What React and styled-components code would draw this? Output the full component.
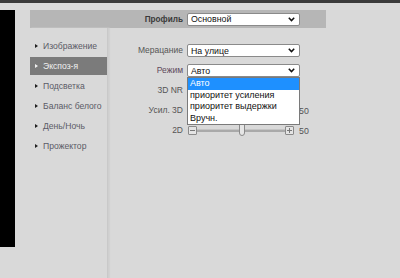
import React from "react";
import styled, { createGlobalStyle } from "styled-components";

const Global = createGlobalStyle`
  html, body { margin: 0; padding: 0; }
  body {
    background: #d9d9d9;
    font-family: "Liberation Sans", Arial, sans-serif;
    font-size: 9px;
    color: #555;
    width: 400px;
    height: 278px;
    overflow: hidden;
  }
`;

const Page = styled.div`
  display: flex;
  flex-direction: column;
  height: 278px;
`;

const TopBar = styled.div`
  height: 3px;
  background: #3a3a3a;
  flex: none;
`;

const Body = styled.div`
  display: flex;
  flex: 1;
  padding-top: 7px;
`;

const Screen = styled.div`
  width: 15px;
  height: 237px;
  background: #000;
  flex: none;
  margin-right: 15px;
`;

const Main = styled.div`
  width: 296px;
  display: flex;
  flex-direction: column;
`;

const ProfileBar = styled.div`
  height: 18px;
  background: #b6b6b6;
  display: flex;
  align-items: center;
  justify-content: flex-end;
  padding-right: 26px;
  gap: 4px;
`;

const ProfileLabel = styled.span`
  font-weight: bold;
  color: #3a3a3a;
  font-size: 8.2px;
`;

const Columns = styled.div`
  display: flex;
  flex: 1;
`;

const Sidebar = styled.div`
  width: 77px;
  padding-top: 9px;
  display: flex;
  flex-direction: column;
  gap: 2px;
  border-right: 1px solid #c9c9c9;
  box-shadow: 1px 0 1px #cfcfcf, 2px 0 1px #d3d3d3;
`;

const NavItem = styled.div`
  height: 18px;
  display: flex;
  align-items: center;
  padding-left: 5px;
  gap: 4px;
  font-size: 8.6px;
  white-space: nowrap;
  background: ${p => (p.$active ? "#7b7b7b" : "transparent")};
  color: ${p => (p.$active ? "#f0f0f0" : "#5b5b66")};
`;

const Arrow = styled.span`
  width: 0;
  height: 0;
  border-top: 2.5px solid transparent;
  border-bottom: 2.5px solid transparent;
  border-left: 3px solid ${p => (p.$active ? "#f0f0f0" : "#222")};
  margin-right: 1px;
  flex: none;
`;

const Form = styled.div`
  flex: 1;
  padding-top: 16px;
  padding-left: 2px;
  display: flex;
  flex-direction: column;
  position: relative;
`;

const Row = styled.div`
  height: 20px;
  display: flex;
  align-items: flex-start;
  gap: 4px;
`;

const Label = styled.div`
  width: 73px;
  text-align: right;
  line-height: 13px;
  font-size: 8.5px;
  white-space: nowrap;
  color: ${p => p.$color || "#555"};
`;

const Select = styled.div`
  width: 113px;
  height: 13px;
  box-sizing: border-box;
  background: #fff;
  border: 1px solid #8a8a8a;
  border-radius: 2px;
  display: flex;
  align-items: center;
  justify-content: space-between;
  padding: 0 4px 0 3px;
  font-size: 8.8px;
  color: #111;
  position: relative;
  flex: none;
`;

const Chevron = () => (
  <svg width="7" height="5" viewBox="0 0 7 5" style={{ marginLeft: "auto" }}>
    <path d="M0.8 0.8 L3.5 3.6 L6.2 0.8" fill="none" stroke="#111" strokeWidth="1.5" />
  </svg>
);

const Dropdown = styled.div`
  position: absolute;
  left: -1px;
  top: 12px;
  width: 113px;
  box-sizing: border-box;
  background: #fff;
  border: 1px solid #7a7a7a;
  z-index: 2;
`;

const Option = styled.div`
  height: 11.5px;
  line-height: 11.5px;
  padding-left: 2px;
  font-size: 9px;
  color: ${p => (p.$hl ? "#fff" : "#111")};
  background: ${p => (p.$hl ? "#1e90ff" : "transparent")};
`;

const SliderWrap = styled.div`
  display: flex;
  align-items: center;
  height: 13px;
  padding-left: 1px;
`;

const StepBtn = styled.div`
  width: 9px;
  height: 9px;
  box-sizing: border-box;
  border: 1px solid #8a8a8a;
  border-radius: 1px;
  background: #e4e4e4;
  position: relative;
  flex: none;
  &::before {
    content: "";
    position: absolute;
    left: 1px;
    right: 1px;
    top: 3px;
    height: 1px;
    background: #777;
  }
  &::after {
    content: "";
    display: ${p => (p.$plus ? "block" : "none")};
    position: absolute;
    top: 1px;
    bottom: 1px;
    left: 3px;
    width: 1px;
    background: #777;
  }
`;

const Track = styled.div`
  width: 88px;
  height: 2px;
  background: #a9a9a9;
  border-top: 1px solid #c4c4c4;
  position: relative;
  flex: none;
`;

const Thumb = styled.div`
  position: absolute;
  top: -7px;
  width: 6px;
  height: 13px;
  box-sizing: border-box;
  border: 1px solid #8a8a8a;
  border-radius: 1px 1px 3px 3px;
  background: #e6e6e6;
`;

const Value = styled.span`
  margin-left: 5px;
  font-size: 8.8px;
  color: #555;
`;

const Slider = ({ pos }) => (
  <SliderWrap>
    <StepBtn />
    <Track>
      <Thumb style={{ left: pos }} />
    </Track>
    <StepBtn $plus />
    <Value>50</Value>
  </SliderWrap>
);

const nav = ["Изображение", "Экспоз-я", "Подсветка", "Баланс белого", "День/Ночь", "Прожектор"];

export default function App() {
  return (
    <Page>
      <Global />
      <TopBar />
      <Body>
        <Screen />
        <Main>
          <ProfileBar>
            <ProfileLabel>Профиль</ProfileLabel>
            <Select>
              Основной
              <Chevron />
            </Select>
          </ProfileBar>
          <Columns>
            <Sidebar>
              {nav.map((n, i) => (
                <NavItem key={n} $active={i === 1}>
                  <Arrow $active={i === 1} />
                  {n}
                </NavItem>
              ))}
            </Sidebar>
            <Form>
              <Row>
                <Label>Мерацание</Label>
                <Select>
                  На улице
                  <Chevron />
                </Select>
              </Row>
              <Row>
                <Label $color="#5e4a5c">Режим</Label>
                <Select>
                  Авто
                  <Chevron />
                  <Dropdown>
                    <Option $hl>Авто</Option>
                    <Option>приоритет усиления</Option>
                    <Option>приоритет выдержки</Option>
                    <Option>Вручн.</Option>
                  </Dropdown>
                </Select>
              </Row>
              <Row>
                <Label>3D NR</Label>
                <Select>
                  <Chevron />
                </Select>
              </Row>
              <Row>
                <Label>Усил. 3D</Label>
                <Slider pos={42} />
              </Row>
              <Row>
                <Label>2D</Label>
                <Slider pos={42} />
              </Row>
            </Form>
          </Columns>
        </Main>
      </Body>
    </Page>
  );
}
